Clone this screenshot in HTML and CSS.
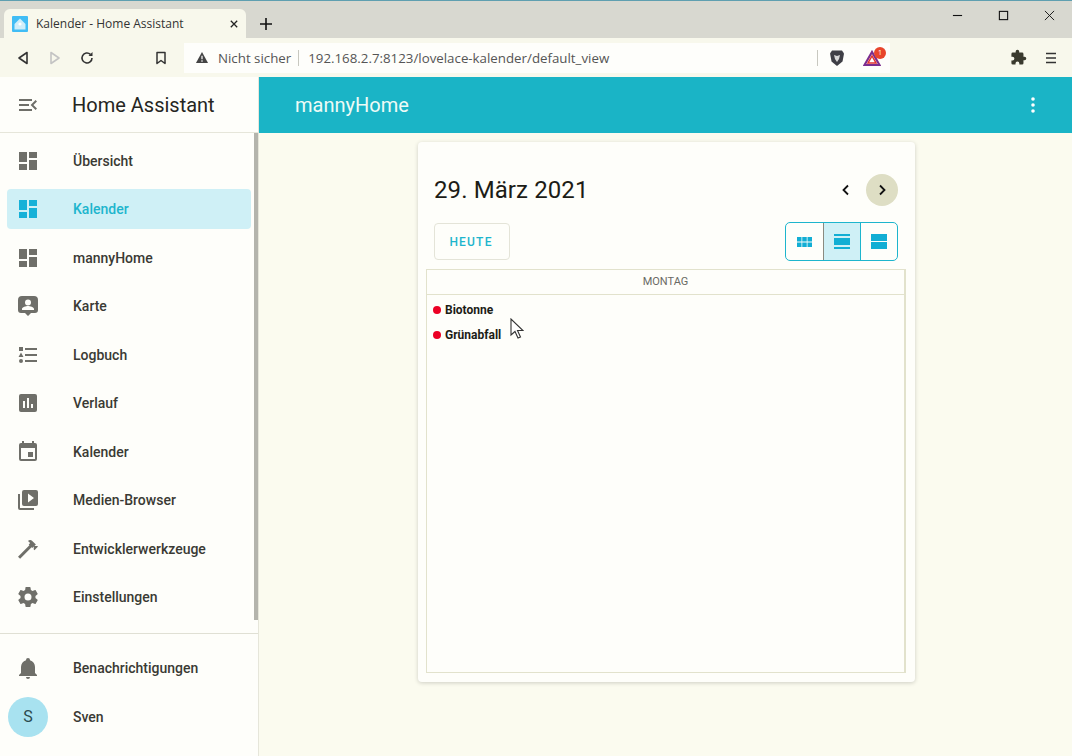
FILE: index.html
```html
<!DOCTYPE html>
<html lang="de">

<head>
  <meta charset="UTF-8">
  <title>Kalender - Home Assistant</title>
  <link rel="stylesheet" href="styles.css">
</head>

<body>
  <div class="browser">
    <div class="tabstrip">
      <div class="tab">
        <svg class="favicon" viewBox="0 0 16 16"><rect width="16" height="16" rx="1" fill="#41bdf5"/><path d="M8 2.500 2.500 8v5.500h11V8z" fill="#cfeefa"/><circle cx="8" cy="8" r="1.600" fill="#fff"/></svg>
        <span class="tab-title">Kalender - Home Assistant</span>
        <svg class="tab-close" viewBox="0 0 10 10"><path d="M1 1l8 8M9 1l-8 8" stroke="#222" stroke-width="1.600"/></svg>
      </div>
      <svg class="new-tab" viewBox="0 0 12 12"><path d="M6 0v12M0 6h12" stroke="#111" stroke-width="1.600"/></svg>
      <div class="window-btns">
        <svg viewBox="0 0 12 12"><path d="M1 6h10" stroke="#111" stroke-width="1.200"/></svg>
        <svg viewBox="0 0 12 12"><rect x="1.500" y="1.500" width="9" height="9" fill="none" stroke="#111" stroke-width="1.200"/></svg>
        <svg viewBox="0 0 12 12"><path d="M1 1l10 10M11 1 1 11" stroke="#111" stroke-width="1"/></svg>
      </div>
    </div>
    <div class="toolbar">
      <svg class="nav-icon" viewBox="0 0 14 14"><path d="M11 1.500v11L3 7z" fill="none" stroke="#333" stroke-width="1.600" stroke-linejoin="round"/></svg>
      <svg class="nav-icon" viewBox="0 0 14 14"><path d="M3 1.500v11L11 7z" fill="none" stroke="#c4c4c4" stroke-width="1.600" stroke-linejoin="round"/></svg>
      <svg class="nav-icon" viewBox="0 0 14 14"><path d="M12 7a5 5 0 1 1-1.600-3.700" fill="none" stroke="#333" stroke-width="1.600"/><path d="M12.500 1v4h-4z" fill="#333"/></svg>
      <svg class="nav-icon bookmark" viewBox="0 0 14 14"><path d="M3 1.500h8v11L7 9.500l-4 3z" fill="none" stroke="#333" stroke-width="1.500" stroke-linejoin="round"/></svg>
      <div class="urlbar">
        <svg class="warn" viewBox="0 0 14 14"><path d="M7 1 .5 13h13z" fill="#444"/><path d="M7 5v4M7 10v1.500" stroke="#fff" stroke-width="1.300"/></svg>
        <span class="not-secure">Nicht sicher</span>
        <span class="url-sep"></span>
        <span class="url">192.168.2.7:8123/lovelace-kalender/default_view</span>
        <span class="url-sep end"></span>
        <svg class="brave" viewBox="0 0 16 18"><path d="M3 1.500h10l2 3-1.500 8L8 17l-5.500-4.500L1 4.500z" fill="#3f3f46"/><path d="M5 6l3 1 3-1-1 4-2 3-2-3z" fill="#d8d8d8"/></svg>
        <span class="bat">
          <svg viewBox="0 0 18 16"><path d="M9 2 1.500 15h15z" fill="none" stroke="#7b2d8e" stroke-width="2.200"/><path d="M9 6 5 13h8z" fill="none" stroke="#e0312f" stroke-width="1.500"/></svg>
          <span class="bat-badge">1</span>
        </span>
      </div>
      <svg class="puzzle" viewBox="0 0 24 24"><path d="M20.500 11H19V7a2 2 0 0 0-2-2h-4V3.500a2.500 2.500 0 0 0-5 0V5H4a2 2 0 0 0-2 2v3.800h1.500a2.700 2.700 0 0 1 0 5.400H2V20a2 2 0 0 0 2 2h3.800v-1.500a2.700 2.700 0 0 1 5.400 0V22H17a2 2 0 0 0 2-2v-4h1.500a2.500 2.500 0 0 0 0-5z" fill="#3a3a2e"/></svg>
      <svg class="menu" viewBox="0 0 12 12"><path d="M1 1.500h10M1 6h10M1 10.500h10" stroke="#333" stroke-width="1.400"/></svg>
    </div>
  </div>

  <div class="app">
    <aside class="sidebar">
      <div class="side-head">
        <svg class="icon" viewBox="0 0 24 24"><path d="M21 15.610 19.590 17l-5.010-5 5.010-5L21 8.390 17.440 12zM3 6h13v2H3zm0 7v-2h10v2zm0 5v-2h13v2z"/></svg>
        <span class="side-title">Home Assistant</span>
      </div>
      <nav class="side-nav">
        <a class="item"><svg class="icon" viewBox="0 0 24 24"><path d="M13 3v6h8V3m-8 18h8V11h-8M3 21h8v-6H3m0-2h8V3H3z"/></svg>Übersicht</a>
        <a class="item active"><svg class="icon" viewBox="0 0 24 24"><path d="M13 3v6h8V3m-8 18h8V11h-8M3 21h8v-6H3m0-2h8V3H3z"/></svg>Kalender</a>
        <a class="item"><svg class="icon" viewBox="0 0 24 24"><path d="M13 3v6h8V3m-8 18h8V11h-8M3 21h8v-6H3m0-2h8V3H3z"/></svg>mannyHome</a>
        <a class="item"><svg class="icon" viewBox="0 0 24 24"><path d="M18 2H6a4 4 0 0 0-4 4v10a3 3 0 0 0 3 3h4l3 3 3-3h4a3 3 0 0 0 3-3V6a4 4 0 0 0-4-4zm-6 3.500a3 3 0 1 1 0 6 3 3 0 0 1 0-6zM18 16H6v-1c0-2 4-3 6-3s6 1 6 3z"/></svg>Karte</a>
        <a class="item"><svg class="icon" viewBox="0 0 24 24"><path d="M5 9.500 7.500 14h-5zM3 4h4v4H3zm2 16a2 2 0 1 0 0-4 2 2 0 0 0 0 4zM9 5v2h12V5zm0 14h12v-2H9zm0-6h12v-2H9z"/></svg>Logbuch</a>
        <a class="item"><svg class="icon" viewBox="0 0 24 24"><path d="M19 3H5a2 2 0 0 0-2 2v14a2 2 0 0 0 2 2h14a2 2 0 0 0 2-2V5a2 2 0 0 0-2-2zM9 17H7v-7h2zm4 0h-2V7h2zm4 0h-2v-4h2z"/></svg>Verlauf</a>
        <a class="item"><svg class="icon" viewBox="0 0 24 24"><path d="M19 19H5V8h14m-3-7v2H8V1H6v2H5a2 2 0 0 0-2 2v14a2 2 0 0 0 2 2h14a2 2 0 0 0 2-2V5a2 2 0 0 0-2-2h-1V1m-1 11h-5v5h5z"/></svg>Kalender</a>
        <a class="item"><svg class="icon" viewBox="0 0 24 24"><path d="M4 6H2v14a2 2 0 0 0 2 2h14v-2H4zm16-4H8a2 2 0 0 0-2 2v12a2 2 0 0 0 2 2h12a2 2 0 0 0 2-2V4a2 2 0 0 0-2-2zm-8 12.500v-9l6 4.500z"/></svg>Medien-Browser</a>
        <a class="item"><svg class="icon" viewBox="0 0 24 24"><path d="M2 19.630 13.430 8.200l-.71-.7 1.420-1.430L12 3.890c1.200-1.190 3.090-1.190 4.270 0l3.600 3.610-1.420 1.410h2.840l.71.710-3.550 3.550-.71-.71V9.620l-1.470 1.420-.71-.71L4.130 21.760z"/></svg>Entwicklerwerkzeuge</a>
        <a class="item"><svg class="icon" viewBox="0 0 24 24"><path d="M12 15.500a3.500 3.500 0 1 1 0-7 3.500 3.500 0 0 1 0 7zm7.430-2.530c.04-.32.07-.64.07-.97s-.03-.66-.07-1l2.110-1.630c.19-.15.24-.42.12-.64l-2-3.460c-.12-.22-.39-.31-.61-.22l-2.490 1c-.52-.39-1.060-.73-1.690-.98l-.37-2.650A.506.506 0 0 0 14 2h-4c-.25 0-.46.18-.5.420l-.37 2.650c-.63.25-1.170.59-1.690.98l-2.490-1c-.22-.09-.49 0-.61.220l-2 3.460c-.13.220-.07.490.12.640L4.570 11c-.04.340-.07.670-.07 1s.03.650.07.970l-2.110 1.660c-.19.150-.25.420-.12.640l2 3.460c.12.220.39.300.61.220l2.490-1.010c.52.400 1.060.740 1.690.990l.37 2.650c.04.240.25.420.5.420h4c.25 0 .46-.18.5-.42l.37-2.650c.63-.26 1.170-.59 1.690-.99l2.490 1.010c.22.080.49 0 .61-.22l2-3.460c.12-.22.07-.49-.12-.64z"/></svg>Einstellungen</a>
      </nav>
      <div class="side-foot">
        <a class="item"><svg class="icon" viewBox="0 0 24 24"><path d="M21 19v1H3v-1l2-2v-6c0-3.100 2-5.800 5-6.700V4a2 2 0 0 1 4 0v.3c3 .9 5 3.600 5 6.700v6zm-7 2a2 2 0 0 1-4 0z"/></svg>Benachrichtigungen</a>
        <a class="item user"><span class="avatar">S</span>Sven</a>
      </div>
    </aside>

    <main class="content">
      <header class="topbar">
        <span class="topbar-title">mannyHome</span>
        <svg class="dots" viewBox="0 0 4 16"><circle cx="2" cy="2" r="1.800"/><circle cx="2" cy="8" r="1.800"/><circle cx="2" cy="14" r="1.800"/></svg>
      </header>
      <section class="card">
        <div class="cal-head">
          <h1 class="cal-date">29. März 2021</h1>
          <div class="cal-nav">
            <span class="nav-btn"><svg viewBox="0 0 12 12"><path d="M8 1.500 3.500 6 8 10.500" fill="none" stroke="#111" stroke-width="1.800"/></svg></span>
            <span class="nav-btn hover"><svg viewBox="0 0 12 12"><path d="M4 1.500 8.500 6 4 10.500" fill="none" stroke="#111" stroke-width="1.800"/></svg></span>
          </div>
        </div>
        <div class="cal-tools">
          <button class="today">HEUTE</button>
          <div class="view-toggle">
            <span class="view-btn"><svg class="view-month" viewBox="0 0 15 10"><path d="M0 0h4.500v4.500H0zm5.250 0h4.500v4.500h-4.500zm5.250 0H15v4.500h-4.500zM0 5.500h4.500V10H0zm5.250 0h4.500V10h-4.500zm5.250 0H15V10h-4.500z"/></svg></span>
            <span class="view-btn on"><svg viewBox="0 0 16 15"><path d="M0 0h16v2H0zm0 4h16v7H0zm0 9h16v2H0z"/></svg></span>
            <span class="view-btn"><svg viewBox="0 0 16 15"><path d="M0 0h16v7H0zm0 8h16v7H0z"/></svg></span>
          </div>
        </div>
        <div class="grid">
          <div class="grid-day">MONTAG</div>
          <div class="grid-body">
            <div class="event"><span class="dot"></span>Biotonne</div>
            <div class="event"><span class="dot"></span>Grünabfall</div>
          </div>
        </div>
      </section>
    </main>
  </div>

  <svg class="cursor" viewBox="0 0 14 22"><path d="M1 1v16l4-3.500 3 6.500 2.500-1-3-6.500H13z" fill="#fff" stroke="#333" stroke-width="1.100"/></svg>
</body>

</html>
```

FILE: styles.css
```css
html, body {
  margin: 0;
  height: 756px;
  overflow: hidden;
}

body {
  font-family: Roboto, 'Liberation Sans', sans-serif;
  background: #fbfbef;
  color: #26261f;
  display: flex;
  flex-direction: column;
}

/* browser chrome */
.browser {
  height: 77px;
  flex: none;
  font-family: 'Open Sans', 'Noto Sans', sans-serif;
}

.tabstrip {
  height: 38px;
  box-sizing: border-box;
  border-top: 1px solid #5f9fb0;
  background: #d8d8d0;
  display: flex;
  align-items: flex-end;
  padding-left: 4px;
}

.tab {
  width: 242px;
  height: 29px;
  box-sizing: border-box;
  background: #f8f8ec;
  border-radius: 6px 6px 0 0;
  display: flex;
  align-items: center;
  padding: 0 8px 0 8px;
  font-size: 12px;
  color: #333;
}

.favicon {
  width: 16px;
  height: 16px;
  margin-right: 8px;
}

.tab-title {
  flex: 1;
}

.tab-close {
  width: 8px;
  height: 8px;
}

.new-tab {
  width: 12px;
  height: 12px;
  margin: 0 0 8px 14px;
}

.window-btns {
  margin-left: auto;
  align-self: flex-start;
  display: flex;
  gap: 35px;
  padding: 9px 17px 0 0;
}

.window-btns svg {
  width: 11px;
  height: 11px;
}

.toolbar {
  height: 39px;
  box-sizing: border-box;
  background: #f8f8ec;
  display: flex;
  align-items: center;
  padding-left: 16px;
}

.nav-icon {
  width: 14px;
  height: 14px;
  margin-right: 18px;
}

.bookmark {
  margin: 0 16px 0 42px;
}

.urlbar {
  width: 706px;
  height: 30px;
  box-sizing: border-box;
  background: #fefefb;
  display: flex;
  align-items: center;
  padding-left: 11px;
  font-size: 13.300px;
}

.warn {
  width: 14px;
  height: 13px;
  margin-right: 9px;
}

.not-secure {
  color: #555;
}

.url-sep {
  width: 1px;
  height: 16px;
  background: #c8c8c0;
  margin: 0 9px 0 7px;
}

.url-sep.end {
  margin: 0 11px 0 auto;
}

.url {
  color: #555;
}

.brave {
  width: 16px;
  height: 18px;
  margin-right: 18px;
}

.bat {
  position: relative;
  width: 18px;
  height: 16px;
  margin-right: 9px;
}

.bat svg {
  width: 18px;
  height: 16px;
  display: block;
}

.bat-badge {
  position: absolute;
  top: -3px;
  right: -5px;
  width: 12px;
  height: 12px;
  border-radius: 50%;
  background: #e8452c;
  color: #fff;
  font-size: 7px;
  line-height: 12px;
  text-align: center;
}

.puzzle {
  width: 17px;
  height: 17px;
  margin-left: 120px;
}

.menu {
  width: 12px;
  height: 12px;
  margin-left: 18px;
}

/* app */
.app {
  flex: 1;
  display: flex;
  min-height: 0;
}

.sidebar {
  width: 259px;
  flex: none;
  box-sizing: border-box;
  border-right: 1px solid #e6e6da;
  background: #fefefa;
  display: flex;
  flex-direction: column;
  position: relative;
}

.sidebar::after {
  content: '';
  position: absolute;
  top: 56px;
  right: 0;
  width: 4px;
  height: 487px;
  background: #b4b4ac;
}

.side-head {
  height: 56px;
  flex: none;
  box-sizing: border-box;
  border-bottom: 1px solid #e6e6da;
  display: flex;
  align-items: center;
  padding-left: 16px;
}

.side-title {
  font-size: 20px;
  margin-left: 32px;
  color: #26261f;
}

.icon {
  width: 24px;
  height: 24px;
  flex: none;
  fill: #6f6f69;
}

.side-nav {
  height: 501px;
  flex: none;
  box-sizing: border-box;
  padding-top: 7.500px;
  border-bottom: 1px solid #e0e0d4;
}

.item {
  height: 40px;
  margin: 0 7px 8.500px 7px;
  padding-left: 9px;
  display: flex;
  align-items: center;
  gap: 33px;
  font-size: 14px;
  font-weight: 500;
  color: #3a3a34;
  border-radius: 4px;
}

.item.active {
  background: #cff0f6;
  color: #1db5cd;
}

.item.active .icon {
  fill: #16b1d8;
}

.side-foot {
  padding-top: 14px;
}

.item.user {
  margin-left: 8px;
  padding-left: 0;
  gap: 25px;
}

.avatar {
  width: 40px;
  height: 40px;
  border-radius: 50%;
  background: #a8e2f0;
  color: #2c4a4e;
  font-size: 16px;
  font-weight: 400;
  display: flex;
  align-items: center;
  justify-content: center;
}

.content {
  flex: 1;
  display: flex;
  flex-direction: column;
  align-items: center;
  min-width: 0;
}

.topbar {
  align-self: stretch;
  height: 56px;
  flex: none;
  background: #1ab4c6;
  color: #eefbf6;
  display: flex;
  align-items: center;
  justify-content: space-between;
  padding: 0 36px;
}

.topbar-title {
  font-size: 20px;
}

.dots {
  width: 4px;
  height: 16px;
  fill: #fff;
  margin-right: 1px;
}

/* calendar card */
.card {
  width: 497px;
  height: 540px;
  box-sizing: border-box;
  margin: 9px 0 0 2px;
  background: #fefefa;
  border-radius: 4px;
  box-shadow: 0 1px 4px rgba(0, 0, 0, 0.18);
  padding: 28px 9px 9px 8px;
  display: flex;
  flex-direction: column;
}

.cal-head {
  height: 40px;
  display: flex;
  align-items: center;
  justify-content: space-between;
  padding: 0 8px;
}

.cal-date {
  margin: 0;
  font-size: 24px;
  font-weight: 400;
  letter-spacing: 0.1px;
  color: #1c1c16;
}

.cal-nav {
  display: flex;
  gap: 4px;
}

.nav-btn {
  width: 32px;
  height: 32px;
  border-radius: 50%;
  display: flex;
  align-items: center;
  justify-content: center;
}

.nav-btn svg {
  width: 12px;
  height: 12px;
}

.nav-btn.hover {
  background: #dedec4;
}

.cal-tools {
  display: flex;
  justify-content: space-between;
  align-items: center;
  padding: 0 8px;
  margin-top: 12px;
}

.today {
  width: 76px;
  height: 37px;
  font-family: inherit;
  font-size: 12px;
  font-weight: 500;
  letter-spacing: 1.200px;
  color: #1db5cd;
  background: transparent;
  border: 1px solid #e4e4d8;
  border-radius: 4px;
  padding: 0 2px 0 0;
}

.view-toggle {
  display: flex;
  height: 39px;
  box-sizing: border-box;
  border: 1px solid #1db5cd;
  border-radius: 5px;
  overflow: hidden;
}

.view-btn {
  width: 37px;
  box-sizing: border-box;
  display: flex;
  align-items: center;
  justify-content: center;
}

.view-btn + .view-btn {
  border-left: 1px solid #1db5cd;
}

.view-btn.on {
  background: #cff0f6;
  border-left-color: #8a8a80;
}

.view-btn svg {
  width: 16px;
  height: 15px;
  fill: #12aed4;
}

.view-btn .view-month {
  width: 15px;
  height: 10px;
}

.grid {
  flex: 1;
  margin-top: 8px;
  border: 1px solid #e2e2cc;
  border-right-width: 2px;
  display: flex;
  flex-direction: column;
}

.grid-day {
  height: 25px;
  box-sizing: border-box;
  border-bottom: 1px solid #e2e2cc;
  font-size: 11px;
  line-height: 24px;
  text-align: center;
  color: #6a6a64;
}

.grid-body {
  padding: 2px 6px;
}

.event {
  height: 25px;
  display: flex;
  align-items: center;
  gap: 4px;
  font-size: 12px;
  font-weight: 700;
  color: #1c1c16;
}

.dot {
  width: 8px;
  height: 8px;
  border-radius: 50%;
  background: #ec0024;
}

.cursor {
  position: absolute;
  left: 510px;
  top: 318px;
  width: 14px;
  height: 22px;
}
```
